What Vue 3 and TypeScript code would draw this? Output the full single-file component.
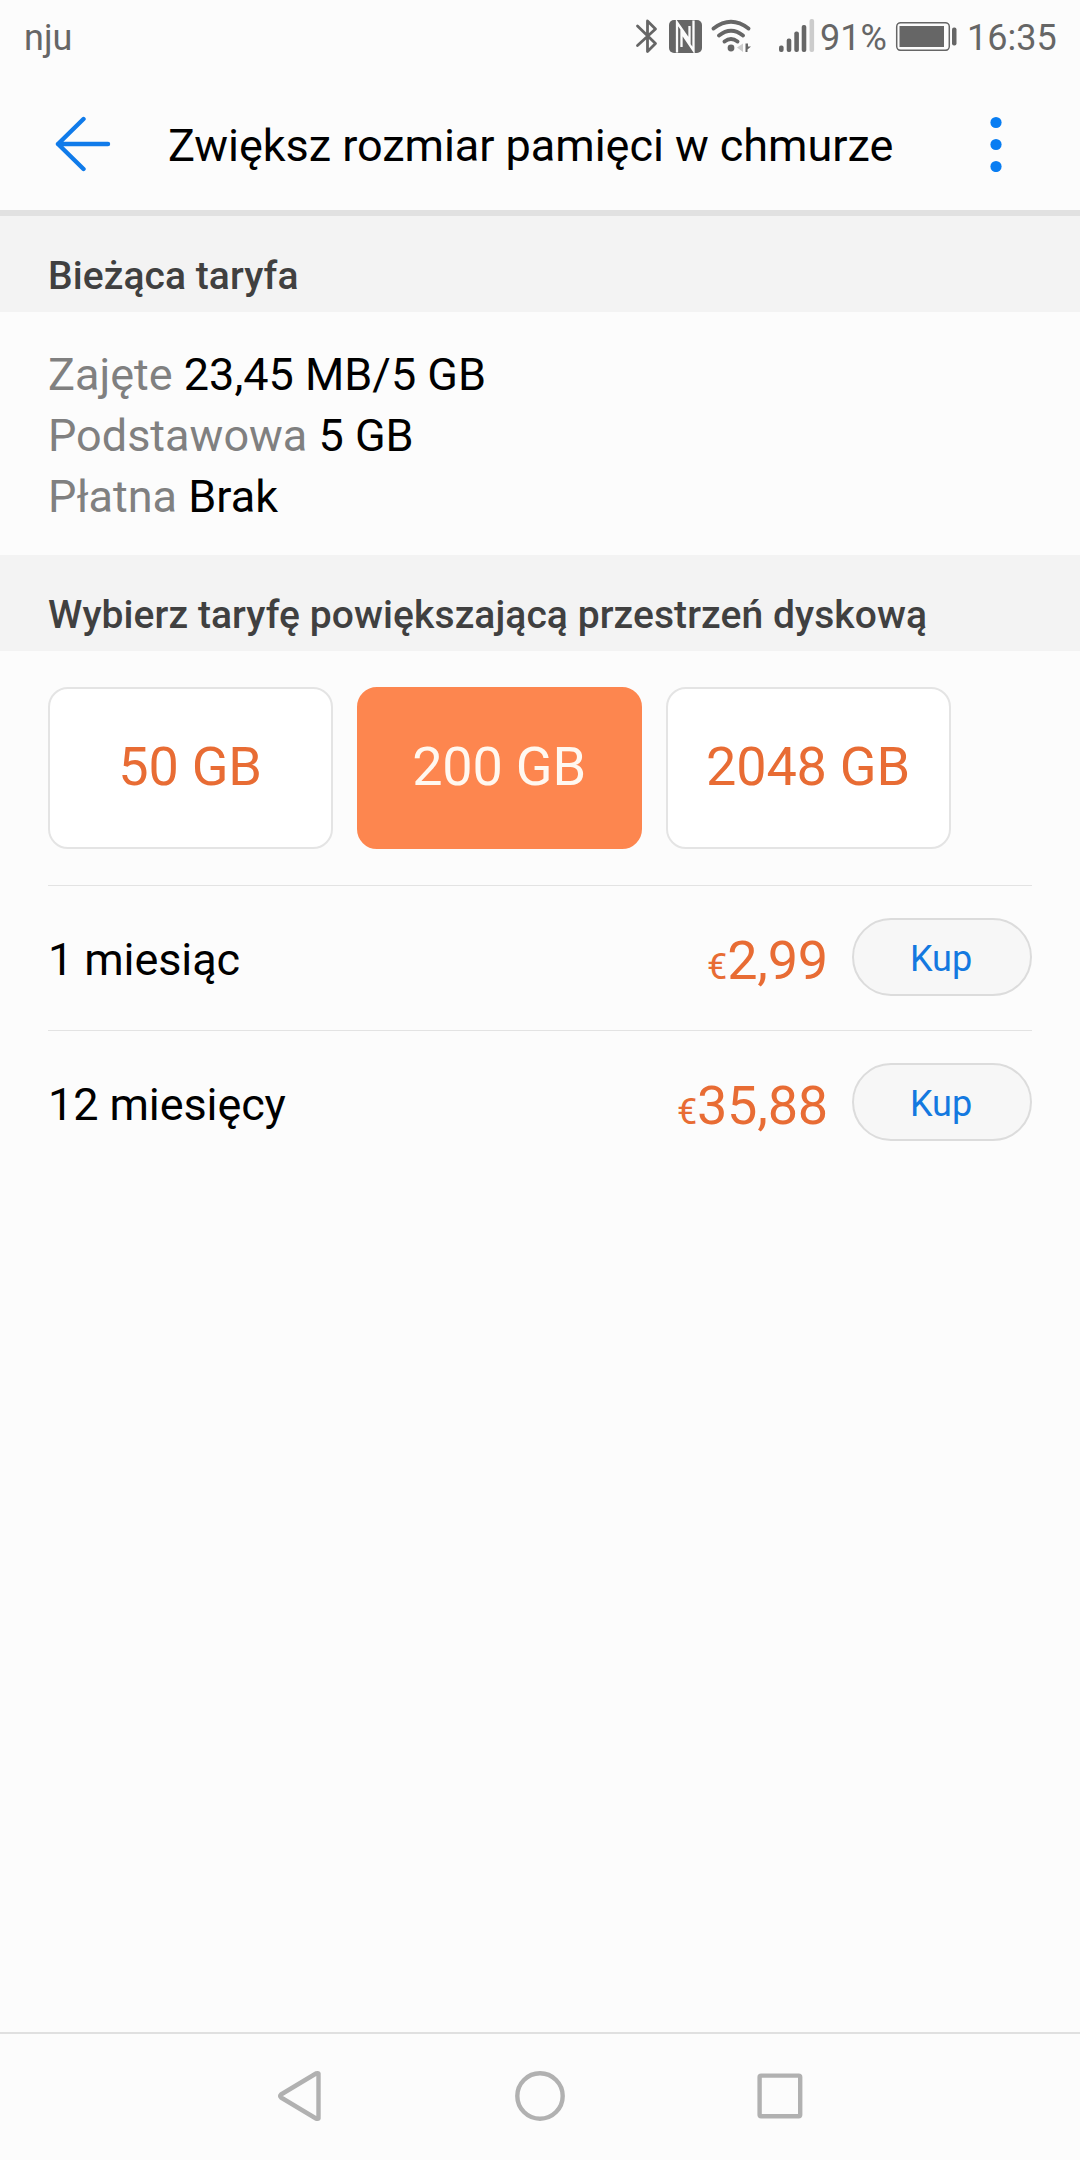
<script setup lang="ts">
import { ref } from 'vue'

interface UsageLine {
  label: string
  value: string
}
interface Offer {
  period: string
  price: string
}

const usage: UsageLine[] = [
  { label: 'Zajęte', value: '23,45 MB/5 GB' },
  { label: 'Podstawowa', value: '5 GB' },
  { label: 'Płatna', value: 'Brak' },
]
const plans: string[] = ['50 GB', '200 GB', '2048 GB']
const selected = ref<string>('200 GB')
const offers: Offer[] = [
  { period: '1 miesiąc', price: '2,99' },
  { period: '12 miesięcy', price: '35,88' },
]
</script>

<template>
  <div class="screen">
    <div class="status">
      <span class="carrier">nju</span>
      <svg class="status-icons" width="186" height="40" viewBox="630 16 186 40">
        <path d="M637.5 26 655.5 43.5 647.5 51.5V21L655.500 29 637.500 45.500" fill="none" stroke="#666" stroke-width="2.8" stroke-linecap="round" stroke-linejoin="round" />
        <rect x="669" y="20" width="33" height="33" rx="5" fill="#666" />
        <path d="M677 52.500V22.500L689.500 40.500V26M681.500 47V32.500L693.500 50.500V20.500" fill="none" stroke="#fcfcfc" stroke-width="2.300" />
      <path d="M713.500 28.500Q731 15 748.500 28.500M719 35.500Q731 26 743 35.500M724.500 41.500Q731 36.500 737.500 41.500" fill="none" stroke="#666" stroke-width="3.8" stroke-linecap="round" />
        <circle cx="731" cy="48" r="3.4" fill="#666" />
        <path d="M737 47.500 743 43.500V52Z" fill="#ccc" />
        <path d="M745.500 43.500V52L747.500 52V49.500L751 46.500H748V43.500Z" fill="#666" />
        <g fill="#666">
          <rect x="779" y="45.500" width="4.600" height="6.500" rx="2" />
          <rect x="786.700" y="38.500" width="4.600" height="13.500" rx="2" />
          <rect x="794.300" y="31.500" width="4.600" height="20.500" rx="2" />
          <rect x="801.700" y="25" width="4.600" height="27" rx="2" />
        </g>
        <rect x="809.500" y="19" width="4.600" height="33" rx="2" fill="#ccc" />
      </svg>
      <span class="percent">91%</span>
      <svg class="battery" width="62" height="30" viewBox="895 21 62 30">
        <rect x="896.700" y="22.700" width="52.600" height="27.600" rx="4" fill="none" stroke="#666" stroke-width="1.500" />
        <rect x="899.500" y="26" width="44.500" height="21" fill="#666" />
        <rect x="952" y="27.500" width="4.500" height="18" rx="2" fill="#666" />
      </svg>
      <span class="clock">16:35</span>
    </div>

    <header class="bar">
      <svg class="back" width="56" height="56" viewBox="55 116 56 56">
        <path d="M108 144H58M83.500 119 58 144 83.500 169" fill="none" stroke="#107bea" stroke-width="4.400" stroke-linecap="round" stroke-linejoin="round" />
      </svg>
      <h1>Zwiększ rozmiar pamięci w chmurze</h1>
      <svg class="more" width="12" height="56" viewBox="0 0 12 56" fill="#087df2">
        <circle cx="6" cy="6.500" r="5.600" />
        <circle cx="6" cy="28.500" r="5.600" />
        <circle cx="6" cy="50.500" r="5.600" />
      </svg>
    </header>

    <h2>Bieżąca taryfa</h2>
    <div class="usage">
      <div v-for="line in usage" :key="line.label">
        <span class="muted">{{ line.label }}</span> {{ line.value }}
      </div>
    </div>

    <h2>Wybierz taryfę powiększającą przestrzeń dyskową</h2>
    <div class="plans">
      <button
        v-for="plan in plans"
        :key="plan"
        class="plan"
        :class="{ active: plan === selected }"
        @click="selected = plan"
      >{{ plan }}</button>
    </div>

    <div class="offers">
      <div v-for="offer in offers" :key="offer.period" class="offer">
        <span class="period">{{ offer.period }}</span>
        <span class="price"><small>€</small>{{ offer.price }}</span>
        <button class="buy">Kup</button>
      </div>
    </div>

    <nav class="nav">
      <svg width="600" height="60" viewBox="240 2066 600 60" fill="none" stroke="#b1b1b1" stroke-width="4.400" stroke-linejoin="round">
        <path d="M318.500 2073.500V2118.500Q318 2119 316 2118.500L281 2097.500Q279.500 2096 281 2094.500L316 2073.500Q318 2073 318.500 2073.500Z" />
        <circle cx="540" cy="2096" r="22.700" />
        <rect x="759.600" y="2075.600" width="40.600" height="40.600" rx="1.500" />
      </svg>
    </nav>
  </div>
</template>

<style>
body {
  margin: 0;
  background: #fcfcfc;
}
</style>

<style scoped>
.screen {
  width: 1080px;
  height: 2160px;
  display: flex;
  flex-direction: column;
  box-sizing: border-box;
  background: #fcfcfc;
  color: #000;
  font-family: Roboto, sans-serif;
  overflow: hidden;
}
button {
  font-family: inherit;
  margin: 0;
  box-sizing: border-box;
}
.status {
  height: 72px;
  flex: none;
  display: flex;
  align-items: flex-start;
  box-sizing: border-box;
  padding: 16px 23px 0 24px;
  font-size: 36px;
  line-height: 45px;
  color: #666;
}
.carrier {
  flex: 1;
}
.status-icons {
  margin-right: 4px;
}
.percent {
  width: 65px;
  white-space: nowrap;
}
.battery {
  margin: 5px 0 0 10px;
}
.clock {
  width: 90px;
  margin-left: 10px;
}
.bar {
  height: 144px;
  flex: none;
  box-sizing: border-box;
  padding: 6px 78px 0 55px;
  display: flex;
  align-items: center;
  border-bottom: 6px solid #e1e1e1;
}
h1 {
  flex: 1;
  margin: 0 0 0 57px;
  padding-top: 4px;
  font-size: 45px;
  line-height: 54px;
  font-weight: 400;
  letter-spacing: -0.04px;
  white-space: nowrap;
}
h2 {
  height: 96px;
  flex: none;
  box-sizing: border-box;
  margin: 0;
  padding: 36px 48px 0;
  background: #f3f3f3;
  color: #404040;
  font-size: 39px;
  line-height: 48px;
  font-weight: 500;
  letter-spacing: 0.08px;
}
.usage {
  padding: 32px 48px 28px;
  font-size: 45px;
  line-height: 61px;
}
.muted {
  color: #808080;
}
.plans {
  display: flex;
  gap: 24px;
  padding: 36px 48px;
}
.plan {
  width: 285px;
  height: 162px;
  padding: 0 1px 4px 0;
  border: 2px solid #e4e4e4;
  border-radius: 20px;
  background: #fff;
  color: #e86c34;
  font-size: 54px;
  letter-spacing: -0.2px;
}
.plan.active {
  border-color: #fd864f;
  background: #fd864f;
  color: #fff8f0;
}
.offers {
  flex: 1;
  margin: 0 48px;
}
.offer {
  height: 145px;
  box-sizing: border-box;
  border-top: 1px solid #e3e3e3;
  display: flex;
  align-items: flex-start;
}
.period {
  flex: 1;
  padding-top: 47px;
  font-size: 45px;
  line-height: 54px;
  letter-spacing: -0.1px;
}
.price {
  margin-right: 24px;
  padding-top: 43px;
  color: #e86c34;
  font-size: 54px;
  line-height: 64px;
  letter-spacing: -0.2px;
}
.price small {
  font-size: 36px;
  line-height: 1;
}
.buy {
  width: 180px;
  height: 78px;
  margin-top: 32px;
  padding: 3px 2px 0 0;
  border: 2px solid #dcdcdc;
  border-radius: 39px;
  background: #f7f7f7;
  color: #1479e0;
  font-size: 36px;
}
.nav {
  height: 128px;
  flex: none;
  box-sizing: border-box;
  border-top: 2px solid #e0e0e0;
  padding-top: 32px;
  display: flex;
  justify-content: center;
}
</style>
